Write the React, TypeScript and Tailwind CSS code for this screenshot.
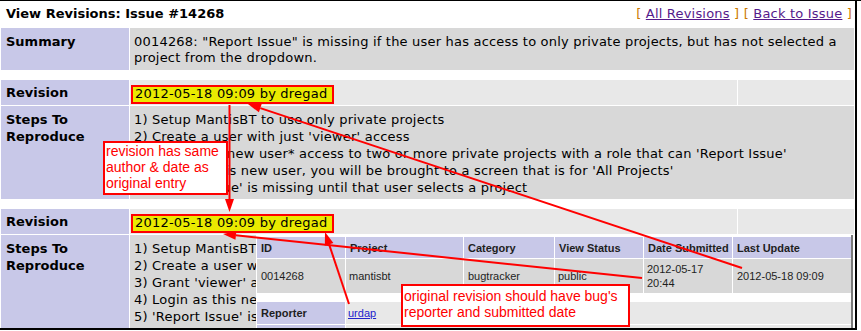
import React from "react";

type Line = { x1: number; y1: number; x2: number; y2: number };

// red annotation arrow, head drawn at (x2, y2)
function Arrow({ x1, y1, x2, y2 }: Line) {
  const len = 13;
  const half = 4.5;
  const a = Math.atan2(y2 - y1, x2 - x1);
  const bx = x2 - len * Math.cos(a);
  const by = y2 - len * Math.sin(a);
  const px = -Math.sin(a) * half;
  const py = Math.cos(a) * half;
  return (
    <g>
      <line x1={x1} y1={y1} x2={bx} y2={by} stroke="#ff0000" strokeWidth={2} />
      <polygon
        points={`${x2},${y2} ${bx + px},${by + py} ${bx - px},${by - py}`}
        fill="#ff0000"
      />
    </g>
  );
}

const stepsNew = [
  "1) Setup MantisBT to use only private projects",
  "2) Create a user with just 'viewer' access",
  "3) Grant *the new user* access to two or more private projects with a role that can 'Report Issue'",
  "4) Login as this new user, you will be brought to a screen that is for 'All Projects'",
  "5) 'Report Issue' is missing until that user selects a project",
];

const stepsOld = [
  "1) Setup MantisBT to use only private projects",
  "2) Create a user with just 'viewer' access",
  "3) Grant 'viewer' access to two or more private projects",
  "4) Login as this new user",
  "5) 'Report Issue' is missing",
];

const Label = ({ children, center }: { children: React.ReactNode; center?: boolean }) => (
  <div
    className={
      center
        ? "bg-[#c8c8e8] font-bold pl-[5px] flex items-center"
        : "bg-[#c8c8e8] font-bold pl-[5px] pt-[5px] leading-[17px]"
    }
  >
    {children}
  </div>
);

const RevisionRow = () => (
  <>
    <Label center>Revision</Label>
    <div className="bg-[#e8e8e8] h-[25px] flex items-center pl-[1px]">
      <span className="mt-[3px] w-[203px] h-[19px] flex items-center pl-[2px] border-2 border-[#ff0000] bg-[#eaea00] whitespace-nowrap tracking-[0.2px]">
        2012-05-18 09:09 by dregad
      </span>
    </div>
    <div className="bg-[#e8e8e8]" />
  </>
);

const BugTable = () => (
  <div className="absolute left-[126px] top-0 right-0 bottom-0 bg-white pl-[1px] pr-[1px] tracking-normal">
    <div className="h-full border-r-2 border-[#7a7a7a] pt-[2px] font-['Liberation_Sans',Arial,sans-serif] text-[11px] leading-[14px] text-[#1e1e1e]">
      <div className="grid grid-cols-[88px_117px_90px_88px_88px_118px] grid-rows-[21px_34px_7px_22px_22px] gap-[1px] bg-white">
        {["ID", "Project", "Category", "View Status", "Date Submitted", "Last Update"].map((h) => (
          <div key={h} className="bg-[#c8c8e8] font-bold flex items-center pl-[4px] whitespace-nowrap">
            {h}
          </div>
        ))}
        <div className="bg-[#d8d8d8] flex items-center pl-[4px]">0014268</div>
        <div className="bg-[#d8d8d8] flex items-center pl-[3px]">mantisbt</div>
        <div className="bg-[#d8d8d8] flex items-center pl-[4px]">bugtracker</div>
        <div className="bg-[#d8d8d8] flex items-center pl-[3px]">public</div>
        <div className="bg-[#d8d8d8] flex items-center pl-[3px]">
          2012-05-17
          <br />
          20:44
        </div>
        <div className="bg-[#d8d8d8] flex items-center pl-[4px] whitespace-nowrap">2012-05-18 09:09</div>
        <div className="col-span-6 bg-white" />
        <div className="bg-[#c8c8e8] font-bold flex items-center pl-[4px]">Reporter</div>
        <div className="col-span-5 bg-[#e8e8e8] flex items-center pl-[2px]">
          <span className="text-[#2222cc] underline">urdap</span>
        </div>
        <div className="bg-[#c8c8e8]" />
        <div className="col-span-5 bg-[#e8e8e8]" />
      </div>
    </div>
  </div>
);

export default function App() {
  return (
    <div className="relative w-[861px] h-[331px] overflow-hidden bg-white border-t border-black font-['DejaVu_Sans',Verdana,sans-serif] text-[13px] text-black">
      <div className="w-[857px] border-r-2 border-b-2 border-black px-[1px]">
        <div className="grid grid-cols-[128px_607px_116px] gap-[1px] bg-white">
          {/* title */}
          <div className="col-span-3 h-[26px] flex items-center justify-between pl-[5px] pr-[2px]">
            <span className="font-bold">View Revisions: Issue #14268</span>
            <span className="whitespace-nowrap tracking-[0.2px]">
              <span className="text-[#cc7a00]">[ </span>
              <span className="text-[#551a8b] underline">All Revisions</span>
              <span className="text-[#cc7a00]"> ] [ </span>
              <span className="text-[#551a8b] underline">Back to Issue</span>
              <span className="text-[#cc7a00]"> ]</span>
            </span>
          </div>

          {/* summary */}
          <div className="bg-[#c8c8e8] font-bold pl-[5px] pt-[6px] leading-[16px] h-[42px]">Summary</div>
          <div className="col-span-2 bg-[#d8d8d8] pl-[4px] pt-[6px] leading-[16px] whitespace-nowrap tracking-[0.2px]">
            0014268: "Report Issue" is missing if the user has access to only private projects, but has not selected a
            <br />
            project from the dropdown.
          </div>

          <div className="col-span-3 h-[8px]" />

          <RevisionRow />
          <Label>
            Steps To
            <br />
            Reproduce
          </Label>
          <div className="col-span-2 h-[93px] bg-[#d8d8d8] pl-[4px] pt-[5px] leading-[17px] whitespace-nowrap overflow-hidden tracking-[0.2px]">
            {stepsNew.map((s) => (
              <div key={s}>{s}</div>
            ))}
          </div>

          <div className="col-span-3 h-[8px]" />

          <RevisionRow />
          <Label>
            Steps To
            <br />
            Reproduce
          </Label>
          <div className="relative col-span-2 h-[93px] bg-[#d8d8d8] pl-[4px] pt-[5px] leading-[17px] whitespace-nowrap overflow-hidden tracking-[0.2px]">
            {stepsOld.map((s) => (
              <div key={s}>{s}</div>
            ))}
            <BugTable />
          </div>
        </div>
      </div>

      {/* annotations */}
      <div className="absolute left-[103px] top-[140px] w-[125px] h-[54px] border-2 border-[#ff0000] bg-white pl-[1px] font-['Liberation_Sans',Arial,sans-serif] text-[14px] leading-[16px] text-[#ff0000] whitespace-nowrap">
        revision has same
        <br />
        author &amp; date as
        <br />
        original entry
      </div>
      <div className="absolute left-[401px] top-[283px] w-[229px] h-[43px] border-2 border-[#ff0000] bg-white pl-[1px] pt-[2px] font-['Liberation_Sans',Arial,sans-serif] text-[14px] leading-[16px] text-[#ff0000] whitespace-nowrap">
        original revision should have bug's
        <br />
        reporter and submitted date
      </div>
      <svg className="absolute left-0 top-0 pointer-events-none" width={861} height={331}>
        <Arrow x1={229.5} y1={104} x2={229.5} y2={211} />
        <Arrow x1={742} y1={267} x2={248} y2={103} />
        <Arrow x1={642} y1={277} x2={223} y2={233} />
        <Arrow x1={349} y1={303} x2={325} y2={231} />
      </svg>
    </div>
  );
}
